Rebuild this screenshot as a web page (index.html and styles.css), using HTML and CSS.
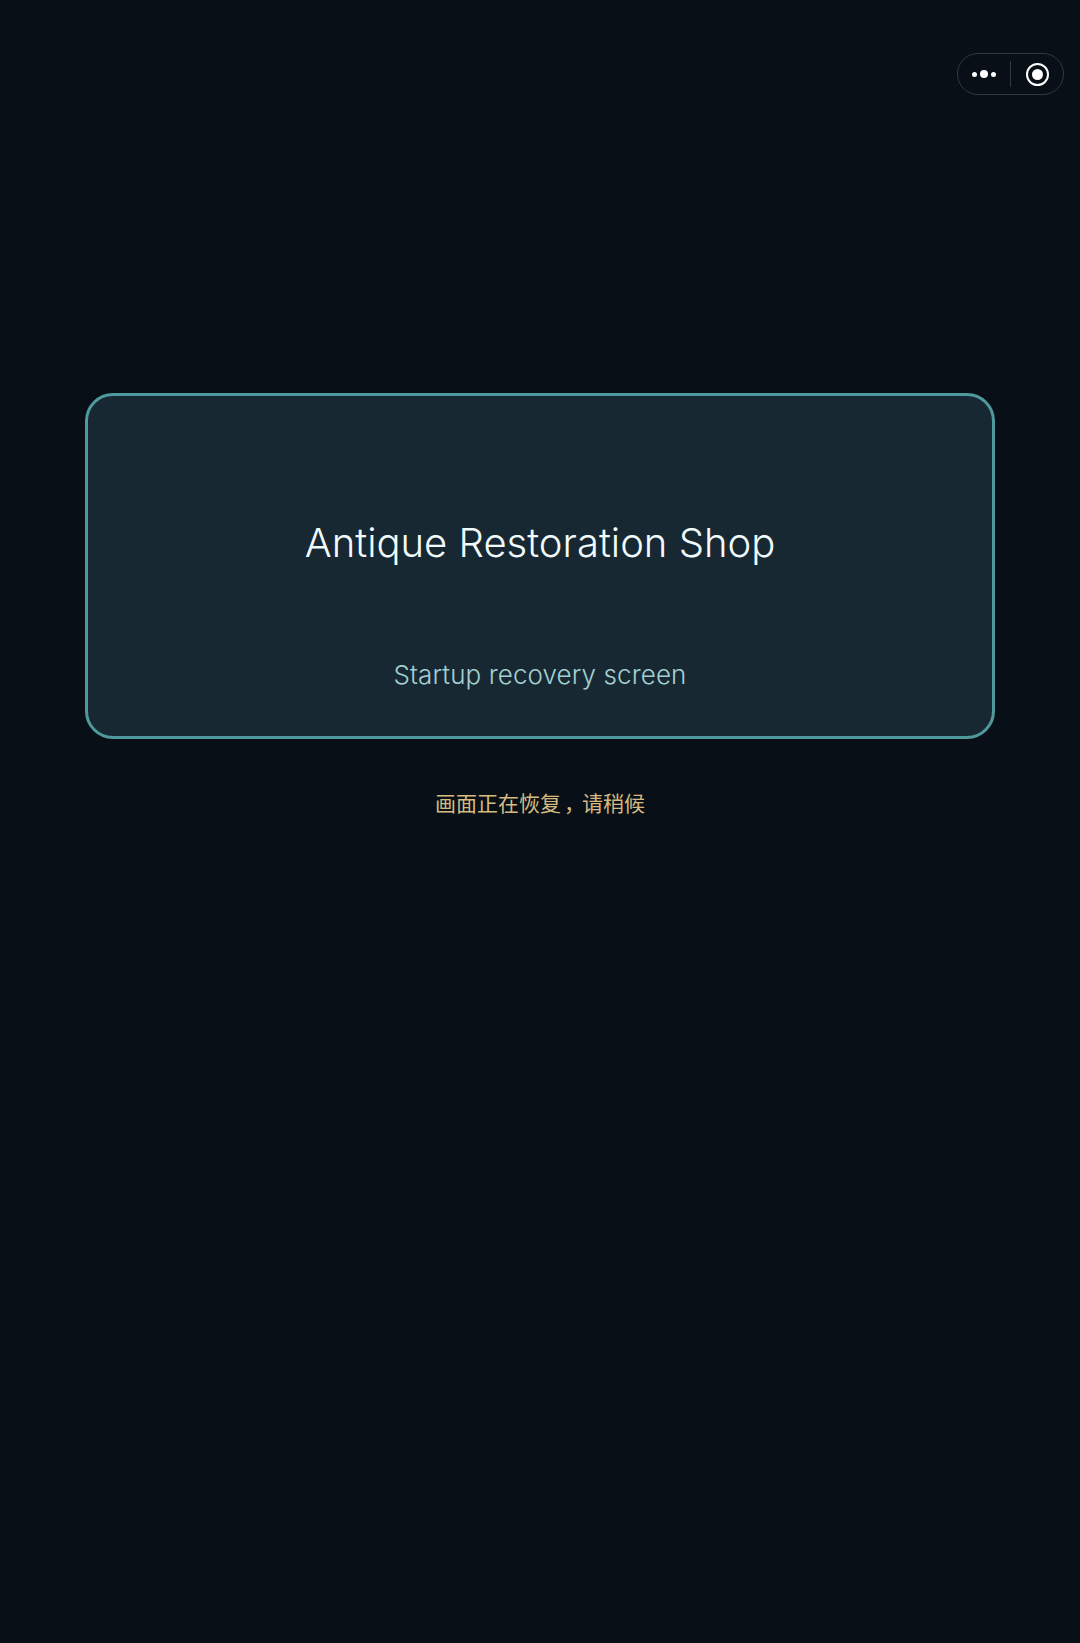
FILE: index.html
```html
<!DOCTYPE html>
<html lang="en">
<head>
    <meta charset="UTF-8">
    <meta name="viewport" content="width=device-width, initial-scale=1.0">
    <title>Antique Restoration Shop</title>
    <link rel="stylesheet" href="styles.css">
</head>
<body>
    <!-- mini program capsule -->
    <div class="capsule">
        <div class="capsuleMenu">
            <span class="dot"></span>
            <span class="dot big"></span>
            <span class="dot"></span>
        </div>
        <div class="capsuleLine"></div>
        <div class="capsuleClose">
            <span class="ring"><span class="ringDot"></span></span>
        </div>
    </div>

    <div class="page">
        <div class="card">
            <h1 class="title">Antique Restoration Shop</h1>
            <p class="subtitle">Startup recovery screen</p>
        </div>
        <p class="status">画面正在恢复<span class="comma">，</span>请稍候</p>
    </div>
</body>
</html>
```

FILE: styles.css
```css
*{
    margin: 0;
    padding: 0;
    box-sizing: border-box;
}
html, body{
    height: 100%;
}
body{
    background-color: #080f16;
    font-family: "Inter", "Noto Sans CJK SC", sans-serif;
    overflow: hidden;
}

/* capsule top right */
.capsule{
    position: absolute;
    top: 53px;
    right: 16px;
    width: 107px;
    height: 42px;
    display: flex;
    align-items: center;
    border: 1px solid #33383e;
    border-radius: 21px;
}
.capsuleMenu{
    width: 52px;
    display: flex;
    align-items: center;
    justify-content: flex-end;
    gap: 3px;
    padding-right: 14px;
}
.dot{
    width: 5px;
    height: 5px;
    border-radius: 50%;
    background-color: #fff;
}
.dot.big{
    width: 8px;
    height: 8px;
}
.capsuleLine{
    width: 1px;
    height: 26px;
    background-color: #33383e;
}
.capsuleClose{
    flex: 1;
    display: flex;
    align-items: center;
    justify-content: center;
}
.ring{
    width: 23px;
    height: 23px;
    border: 2px solid #fff;
    border-radius: 50%;
    display: flex;
    align-items: center;
    justify-content: center;
}
.ringDot{
    width: 11px;
    height: 11px;
    border-radius: 50%;
    background-color: #fff;
}

/* center content */
.page{
    padding: 393px 85px 0;
    text-align: center;
}
.card{
    height: 346px;
    padding-top: 119px;
    background-color: #182833;
    border: 3px solid #4f9a9c;
    border-radius: 28px;
}
.title{
    font-size: 40px;
    font-weight: 300;
    line-height: 56px;
    color: #f2fbfb;
}
.subtitle{
    margin-top: 85px;
    font-size: 26px;
    font-weight: 300;
    letter-spacing: 0.1px;
    line-height: 38px;
    color: #a3d0d2;
}
.status{
    margin-top: 50px;
    font-size: 21px;
    line-height: 30px;
    color: #d5bb80;
}
.comma{
    margin-left: 3px;
    letter-spacing: -3px;
}
```
